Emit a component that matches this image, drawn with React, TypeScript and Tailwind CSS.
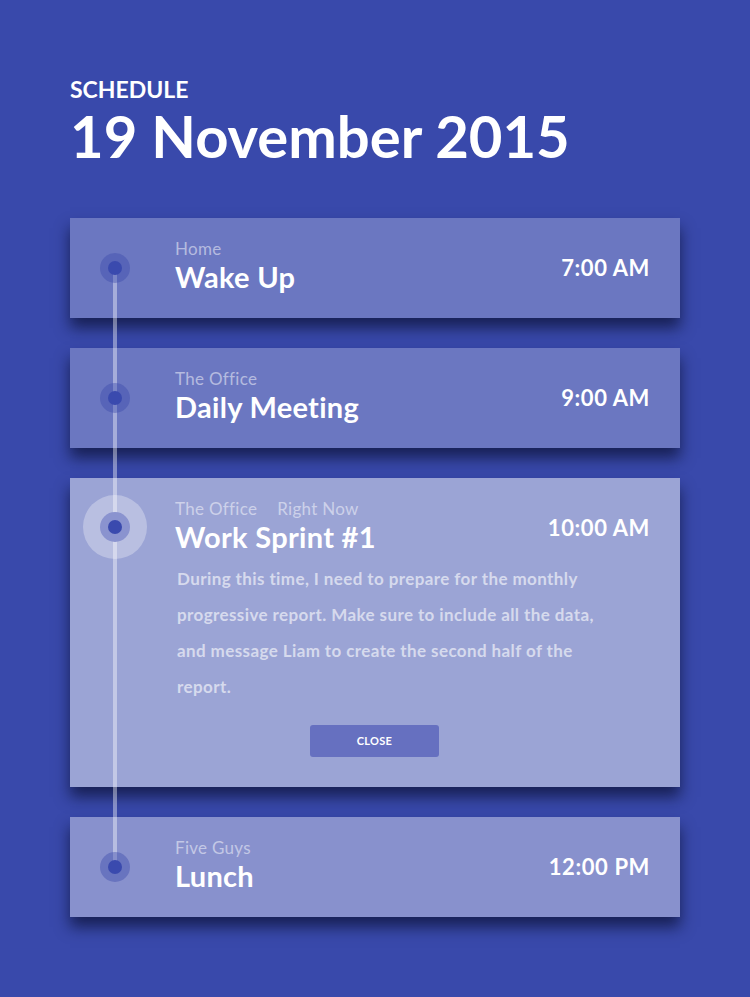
import React from "react";

type Item = {
  place: string;
  title: string;
  time: string;
  bg: string;
  active?: boolean;
};

const font = { fontFamily: "Lato, 'Open Sans', sans-serif" };

function Dot({ active }: { active?: boolean }) {
  if (active) {
    return (
      <div className="w-[64px] h-[64px] rounded-full bg-white/30 flex items-center justify-center">
        <div className="w-[30px] h-[30px] rounded-full bg-[#8a93cf] flex items-center justify-center">
          <div className="w-[14px] h-[14px] rounded-full bg-[#3a4aae]" />
        </div>
      </div>
    );
  }
  return (
    <div className="w-[30px] h-[30px] rounded-full bg-[#3949ab]/40 flex items-center justify-center">
      <div className="w-[14px] h-[14px] rounded-full bg-[#3a4aae]" />
    </div>
  );
}

function Header({ item }: { item: Item }) {
  return (
    <div className="flex items-start">
      <div className="flex-1">
        <div className="flex gap-[20px] text-[17px] leading-[18px] tracking-[0.3px] text-white/50">
          <span>{item.place}</span>
          {item.active && <span>Right Now</span>}
        </div>
        <div className="mt-[4px] text-[29px] leading-[30px] tracking-[0.3px] font-bold text-white">{item.title}</div>
      </div>
      <div className="mt-[14px] text-[22px] leading-[28px] tracking-[0.6px] font-bold text-white pr-[30px]">
        {item.time}
      </div>
    </div>
  );
}

function Card({ item }: { item: Item }) {
  return (
    <div
      className={`relative shadow-[0_10px_14px_rgba(10,15,50,0.7)] ${item.bg} ${
        item.active ? "pt-[22px] pb-[30px]" : "pt-[22px] pb-[26px]"
      }`}
    >
      <div
        className={`absolute z-20 left-[45px] -translate-x-1/2 -translate-y-1/2 ${
          item.active ? "top-[49px]" : "top-[50px]"
        }`}
      >
        <Dot active={item.active} />
      </div>
      <div className="pl-[105px]">
        <Header item={item} />
        {item.active && (
          <>
            <p className="mt-[9px] pl-[2px] w-[440px] text-[17px] leading-[36px] tracking-[0.4px] font-bold text-white/60">
              During this time, I need to prepare for the monthly progressive report. Make sure to include all the data,
              and message Liam to create the second half of the report.
            </p>
            <div className="mt-[20px] pl-[135px] flex">
              <button className="w-[129px] h-[32px] rounded-[3px] bg-[#6670c0] text-white text-[11px] font-bold tracking-[0.3px]">
                CLOSE
              </button>
            </div>
          </>
        )}
      </div>
    </div>
  );
}

export default function App() {
  const items: Item[] = [
    { place: "Home", title: "Wake Up", time: "7:00 AM", bg: "bg-[#6b77c1]" },
    { place: "The Office", title: "Daily Meeting", time: "9:00 AM", bg: "bg-[#6b77c1]" },
    { place: "The Office", title: "Work Sprint #1", time: "10:00 AM", bg: "bg-[#9ba4d5]", active: true },
    { place: "Five Guys", title: "Lunch", time: "12:00 PM", bg: "bg-[#8891cd]" },
  ];
  return (
    <div className="w-[750px] h-[997px] bg-[#3949ab] overflow-hidden" style={font}>
      <div className="pl-[70px] pr-[70px] pt-[76px]">
        <div className="text-[23px] leading-[26px] font-bold text-white">SCHEDULE</div>
        <div className="text-[58px] leading-[64px] font-bold text-white mt-[2px]">19 November 2015</div>
        <div className="relative mt-[50px] flex flex-col gap-[30px]">
          {items.map((it) => (
            <Card key={it.title} item={it} />
          ))}
          <div className="absolute z-10 left-[43px] w-[4px] top-[50px] bottom-[50px] bg-white/40" />
        </div>
      </div>
    </div>
  );
}
